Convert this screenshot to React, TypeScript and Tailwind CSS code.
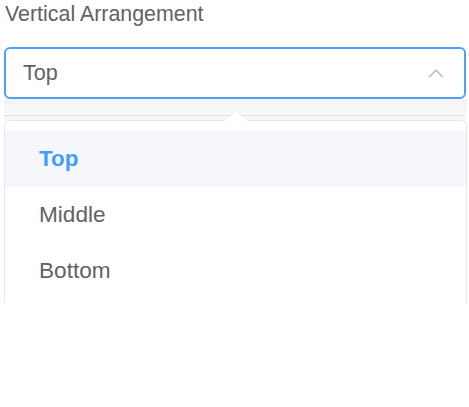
import React from "react";

const options = ["Top", "Middle", "Bottom"];

export default function App() {
  const selected = "Top";

  return (
    <div
      className="w-[469px] h-[407px] bg-white px-[4px] text-[#606266]"
      style={{ fontFamily: '"Liberation Sans", Arial, sans-serif' }}
    >
      <div className="text-[21.4px] leading-[28px] pl-[1px]">Vertical Arrangement</div>

      {/* select input */}
      <div className="mt-[19px] h-[52px] w-[462px] rounded-[6px] border-2 border-[#4ca2fb] flex items-center justify-between pl-[17px] pr-[20px]">
        <span className="text-[21.6px]">Top</span>
        <svg width="16" height="9" viewBox="0 0 16 9" fill="none">
          <path d="M1 8.2 L8 1.2 L15 8.2" stroke="#b4b8c0" strokeWidth="1.3" />
        </svg>
      </div>

      {/* popper area */}
      <div className="relative w-[463px]">
        <div className="h-[16px] bg-gradient-to-b from-[#f3f3f4] to-[#f9f9fa]" />
        <div className="h-[1px] w-[460px] bg-[#dde0e8]" />
        <div className="h-[4px] bg-[#f7f7f9]" />

        {/* arrow */}
        <svg
          className="absolute left-[220px] top-[11px]"
          width="24"
          height="11"
          viewBox="0 0 24 11"
        >
          <path d="M0 11 L12 0 L24 11 Z" fill="#ffffff" />
          <path d="M0.5 10.5 L12 0.5 L23.5 10.5" fill="none" stroke="#eceef3" strokeWidth="1" />
        </svg>

        <div className="h-[183px] overflow-hidden rounded-t-[6px] border border-b-0 border-[#e4e7ed] bg-white pt-[10px]">
          {options.map((o) => (
            <div
              key={o}
              className={
                o === selected
                  ? "h-[56px] flex items-center pl-[34px] bg-[#f5f7fa] text-[#409eff] font-bold text-[22.4px]"
                  : "h-[56px] flex items-center pl-[34px] text-[#606266] text-[22.6px]"
              }
            >
              {o}
            </div>
          ))}
        </div>
      </div>
    </div>
  );
}
